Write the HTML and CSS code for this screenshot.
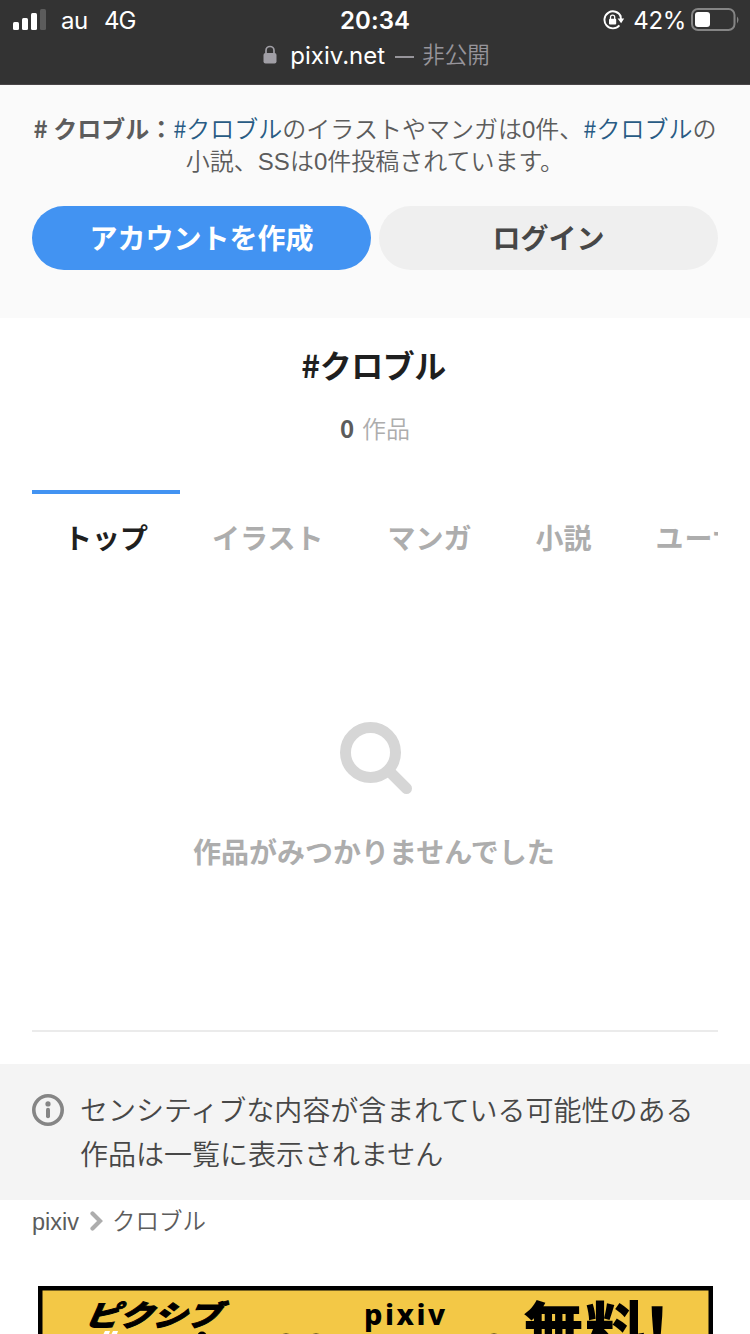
FILE: index.html
```html
<!DOCTYPE html>
<html lang="ja">
<head>
  <meta charset="UTF-8" />
  <meta name="viewport" content="width=device-width, initial-scale=1.0"/>
  <title>#クロブル - pixiv</title>
  <link rel="stylesheet" href="styles.css">
</head>
<body>

  <header class="browser-bar">
    <div class="status">
      <div class="status-left">
        <svg class="signal" viewBox="0 0 34 22" fill="#fff">
          <rect x="0" y="13" width="6" height="8" rx="1.5" />
          <rect x="9" y="9" width="6" height="12" rx="1.5" />
          <rect x="18" y="4" width="6" height="17" rx="1.5" />
          <rect x="27" y="0" width="6" height="21" rx="1.5" fill="#5c5c5c" />
        </svg>
        <span class="carrier">au</span>
        <span class="network">4G</span>
      </div>
      <div class="clock">20:34</div>
      <div class="status-right">
        <svg class="rotation-lock" viewBox="0 0 22 20" fill="none" stroke="#fff" stroke-width="1.9">
          <path d="M17.8 6.5A8.5 8.5 0 1 0 16.4 15.4" />
          <path d="M14.6 8.6h6.6l-3.1 4.6z" fill="#fff" stroke="none" />
          <path d="M17.4 5.6l.7 4" />
          <rect x="6" y="8.8" width="7.2" height="5.6" rx="1" fill="#fff" stroke="none" />
          <path d="M7.5 9V7.2a2.1 2.1 0 0 1 4.2 0V9" stroke-width="1.3" />
        </svg>
        <span class="percent">42%</span>
        <svg class="battery" viewBox="0 0 49 24">
          <rect x="1" y="1" width="42.5" height="21" rx="6" fill="none" stroke="#858585" stroke-width="2" />
          <rect x="4" y="4" width="15" height="15" rx="3" fill="#fff" />
          <path d="M46 8.5q3 3 0 7z" fill="#858585" />
        </svg>
      </div>
    </div>
    <div class="address">
      <svg class="lock" viewBox="0 0 14 19">
        <rect x="0.5" y="8" width="13" height="10.5" rx="2" fill="#a19fa6" />
        <path d="M3 9V5.5a4 4 0 0 1 8 0V9" fill="none" stroke="#a19fa6" stroke-width="1.7" />
      </svg>
      <span class="host">pixiv.net</span>
      <span class="dash"></span>
      <span class="private">非公開</span>
    </div>
  </header>

  <section class="intro">
    <p class="intro-text"><b># クロブル：</b><a>#クロブル</a>のイラストやマンガは<span class="num">0</span>件、<a>#クロブル</a>の<br>小説、<span class="num">SS</span>は<span class="num">0</span>件投稿されています。</p>
    <div class="buttons">
      <button class="btn btn-primary">アカウントを作成</button>
      <button class="btn">ログイン</button>
    </div>
  </section>

  <main>
    <h1 class="tag-title">#クロブル</h1>
    <div class="count"><b>0</b>作品</div>

    <nav class="tabs">
      <a class="tab active">トップ</a>
      <a class="tab">イラスト</a>
      <a class="tab">マンガ</a>
      <a class="tab">小説</a>
      <a class="tab tab-user">ユーザー</a>
    </nav>

    <div class="empty">
      <svg class="search-icon" viewBox="0 0 72 72" fill="none" stroke="#d6d6d6">
        <circle cx="30.5" cy="30.5" r="25" stroke-width="11" />
        <path d="M50 50L66.5 66.5" stroke-width="11" stroke-linecap="round" />
      </svg>
      <p>作品がみつかりませんでした</p>
    </div>
  </main>

  <div class="notice">
    <svg class="info-icon" viewBox="0 0 32 32">
      <circle cx="16" cy="16" r="14.2" fill="none" stroke="#858585" stroke-width="3.6" />
      <circle cx="16" cy="9.9" r="2.6" fill="#858585" />
      <rect x="14" y="13.8" width="4" height="10.5" rx="2" fill="#858585" />
    </svg>
    <p>センシティブな内容が含まれている可能性のある<br>作品は一覧に表示されません</p>
  </div>

  <nav class="breadcrumb">
    <a class="home">pixiv</a>
    <svg class="chevron" viewBox="0 0 13 20" fill="none" stroke="#adadad" stroke-width="4.2" stroke-linecap="round">
      <path d="M2.5 2.5L10 10L2.5 17.5" />
    </svg>
    <a class="current">クロブル</a>
  </nav>

  <div class="banner">
    <svg viewBox="0 0 675 100">
      <rect x="2" y="2" width="671" height="120" fill="#f3c846" stroke="#000" stroke-width="5" />
      <text class="banner-kana" transform="translate(46 40) skewX(-24) scale(1.17 1)">ピクシブ</text>
      <text class="banner-pixiv" x="326" y="39">pixiv</text>
      <text class="banner-free" x="485" y="67">無料</text>
      <text class="banner-free" x="607" y="67">!</text>
      <path d="M67 45h5l-2 6h-6zM75 45h5l-2 6h-6z" fill="#fff" />
      <circle cx="164" cy="50" r="4.5" />
      <ellipse cx="248" cy="51.5" rx="7" ry="4" />
      <ellipse cx="278" cy="51.5" rx="7" ry="4" />
      <ellipse cx="456" cy="51.5" rx="7" ry="4" />
    </svg>
  </div>

</body>
</html>
```

FILE: styles.css
```css
* {
  box-sizing: border-box;
}

html, body {
  margin: 0;
  height: 1334px;
  overflow: hidden;
  background: #fff;
  color: #1f1f1f;
  font-family: 'Noto Sans CJK JP', sans-serif;
}

body {
  width: 750px;
}

p, h1 {
  margin: 0;
}

.browser-bar {
  height: 85px;
  background: #333;
  border-bottom: 1px solid #4a4648;
  color: #fff;
  font-family: 'Inter', 'Noto Sans CJK JP', sans-serif;
  font-size: 24px;
}

.status {
  display: grid;
  grid-template-columns: 1fr auto 1fr;
  height: 40px;
  padding: 0 10px 0 13px;
  align-items: center;
}

.status-left,
.status-right {
  display: flex;
  align-items: center;
}

.status-right {
  justify-content: flex-end;
}

.signal {
  width: 34px;
  height: 22px;
}

.carrier {
  margin-left: 14px;
  letter-spacing: -0.4px;
}

.network {
  margin-left: 16px;
  letter-spacing: -0.8px;
}

.clock {
  margin-right: 3px;
  font-weight: 600;
  letter-spacing: 0.1px;
}

.rotation-lock {
  width: 22px;
  height: 20px;
  margin-right: 8px;
}

.percent {
  letter-spacing: -0.3px;
}

.battery {
  width: 49px;
  height: 24px;
  margin-left: 5px;
}

.address {
  display: flex;
  align-items: center;
  justify-content: center;
  height: 32px;
  padding-left: 3px;
  line-height: 30px;
}

.lock {
  width: 14px;
  height: 19px;
  margin: -4px 13px 0 0;
}

.dash {
  width: 19px;
  height: 2px;
  margin: 1px 8px 0 10px;
  background: #97959b;
}

.private {
  margin-top: -2px;
  color: #97959b;
  font-size: 22.5px;
  font-weight: 350;
}

.intro {
  height: 233px;
  padding: 27px 32px 0;
  background: #fafafa;
}

.intro-text {
  color: #5c5c5c;
  font-size: 24px;
  font-weight: 350;
  line-height: 32px;
  text-align: center;
  white-space: nowrap;
}

.intro-text b {
  font-weight: bold;
}

.intro-text a {
  color: #285b84;
}

.num {
  font-family: 'Liberation Sans', sans-serif;
  line-height: 0;
}

.buttons {
  display: flex;
  gap: 8px;
  margin-top: 30px;
}

.btn {
  flex: 1;
  height: 64px;
  padding: 0 0 2px;
  border: none;
  border-radius: 32px;
  background: #efefef;
  color: #474747;
  font-family: inherit;
  font-size: 28px;
  font-weight: bold;
  line-height: 62px;
}

.btn-primary {
  background: #4293f2;
  color: #fff;
}

main {
  height: 714px;
  margin: 0 32px;
  border-bottom: 2px solid #ebebeb;
}

.tag-title {
  padding: 22px 3px 0 0;
  font-size: 32px;
  letter-spacing: -0.5px;
  line-height: 48px;
  text-align: center;
}

.count {
  display: flex;
  justify-content: center;
  gap: 8px;
  margin-top: 24px;
  color: #adadad;
  font-size: 24px;
  font-weight: 350;
  line-height: 32px;
}

.count b {
  color: #5c5c5c;
  font-weight: bold;
}

.tabs {
  display: flex;
  margin-top: 46px;
  overflow: hidden;
}

.tab {
  flex: none;
  padding: 20px 32px;
  border-top: 4px solid transparent;
  color: #adadad;
  font-size: 28px;
  font-weight: bold;
  line-height: 46px;
}

.tab-user {
  letter-spacing: 1px;
}

.tab.active {
  border-top-color: #4293f2;
  color: #1f1f1f;
}

.empty {
  display: flex;
  flex-direction: column;
  align-items: center;
  margin-top: 142px;
  color: #adadad;
  font-size: 28px;
  font-weight: bold;
  line-height: 44px;
}

.empty p {
  margin-right: 2px;
}

.search-icon {
  width: 72px;
  height: 72px;
  margin: 0 0 35px 2px;
}

.notice {
  display: flex;
  gap: 16px;
  height: 136px;
  margin-top: 32px;
  padding: 23px 32px;
  background: #f4f4f4;
  color: #474747;
  font-size: 28px;
  font-weight: 350;
  line-height: 44px;
}

.info-icon {
  flex: none;
  width: 32px;
  height: 32px;
  margin-top: 7px;
}

.breadcrumb {
  display: flex;
  align-items: center;
  height: 42px;
  padding-left: 32px;
  color: #5c5c5c;
  font-size: 23.5px;
  font-weight: 350;
}

.home {
  padding-top: 2px;
  font-family: 'Liberation Sans', sans-serif;
}

.current {
  padding-bottom: 3px;
}

.chevron {
  width: 13px;
  height: 20px;
  margin: 0 9px 1px 11px;
}

.banner {
  height: 92px;
  margin: 44px 37px 0 38px;
}

.banner svg {
  display: block;
  width: 675px;
}

.banner-kana {
  font-size: 29px;
  font-weight: 900;
  stroke: #000;
  stroke-width: 1px;
}

.banner-pixiv {
  font-family: 'Noto Sans', sans-serif;
  font-size: 29px;
  font-weight: 800;
  letter-spacing: 2.5px;
}

.banner-free {
  font-size: 61px;
  font-weight: 900;
  letter-spacing: 1px;
}
```
